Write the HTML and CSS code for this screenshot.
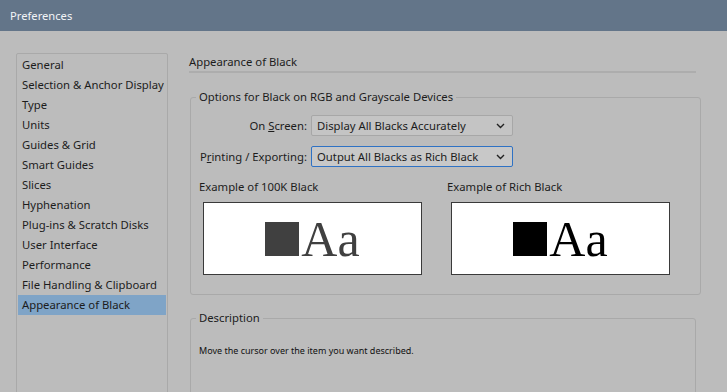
FILE: index.html
```html
<!DOCTYPE html>
<html lang="en">
<head>
    <meta charset="UTF-8">
    <title>Preferences</title>
    <link rel="stylesheet" href="styles.css">
</head>
<body>

<div class="titlebar">Preferences</div>

<div class="window">
    <ul class="sidebar">
        <li>General</li>
        <li>Selection &amp; Anchor Display</li>
        <li>Type</li>
        <li>Units</li>
        <li>Guides &amp; Grid</li>
        <li>Smart Guides</li>
        <li>Slices</li>
        <li>Hyphenation</li>
        <li>Plug-ins &amp; Scratch Disks</li>
        <li>User Interface</li>
        <li>Performance</li>
        <li>File Handling &amp; Clipboard</li>
        <li class="selected">Appearance of Black</li>
    </ul>

    <div class="panel">
        <h3 class="panel-title">Appearance of Black</h3>

        <fieldset class="group">
            <legend>Options for Black on RGB and Grayscale Devices</legend>

            <div class="row">
                <label>On <u>S</u>creen:</label>
                <div class="dropdown">
                    <span>Display All Blacks Accurately</span>
                    <svg width="9" height="6" viewBox="0 0 9 6"><path d="M1 1 L4.5 4.5 L8 1" fill="none" stroke="#222" stroke-width="1.4"/></svg>
                </div>
            </div>
            <div class="row">
                <label>P<u>r</u>inting / Exporting:</label>
                <div class="dropdown focused">
                    <span>Output All Blacks as Rich Black</span>
                    <svg width="9" height="6" viewBox="0 0 9 6"><path d="M1 1 L4.5 4.5 L8 1" fill="none" stroke="#222" stroke-width="1.4"/></svg>
                </div>
            </div>

            <div class="examples">
                <div class="example">
                    <div class="example-label">Example of 100K Black</div>
                    <div class="swatch k100">
                        <span class="square"></span><span class="aa">Aa</span>
                    </div>
                </div>
                <div class="example">
                    <div class="example-label">Example of Rich Black</div>
                    <div class="swatch rich">
                        <span class="square"></span><span class="aa">Aa</span>
                    </div>
                </div>
            </div>
        </fieldset>

        <fieldset class="group description">
            <legend>Description</legend>
            <p>Move the cursor over the item you want described.</p>
        </fieldset>
    </div>
</div>

</body>
</html>
```

FILE: styles.css
```css
html, body { margin: 0; height: 100%; overflow: hidden; }
body {
  background: #bcbcbc;
  font-family: "Noto Sans", "Open Sans", sans-serif;
  font-size: 11.3px;
  color: #1c1c1c;
}

.titlebar {
  height: 31px;
  line-height: 31px;
  background: #637589;
  color: #f2f4f7;
  font-size: 11.2px;
  padding-left: 10px;
}

.window {
  display: flex;
  padding: 22px 0 0 16px;
}

.sidebar {
  list-style: none;
  margin: 0;
  padding: 1px;
  width: 148px;
  height: 400px;
  border: 1px solid #a9a9a9;
  border-radius: 2px;
  flex-shrink: 0;
}
.sidebar li {
  height: 20px;
  line-height: 20px;
  padding-left: 4px;
  white-space: nowrap;
}
.sidebar li.selected { background: #7fa4c7; }

.panel {
  margin-left: 21px;
  width: 507px;
}

.panel-title {
  margin: 0;
  font-size: 11.3px;
  font-weight: normal;
  line-height: 14px;
  padding: 2px 0 2px;
  border-bottom: 2px solid #adadad;
}

.group {
  margin: 17px 0 0 1px;
  padding: 0 5px 19px;
  border: 1px solid #a9a9a9;
  border-radius: 3px;
}
.group legend {
  padding: 0 3px;
  line-height: 14px;
}

.row {
  display: flex;
  align-items: center;
  margin-top: 11px;
}
.row + .row { margin-top: 10px; }
.row label {
  width: 111px;
  text-align: right;
  margin-right: 4px;
  white-space: nowrap;
}
.dropdown {
  width: 191px;
  height: 19px;
  padding: 0 4px 0 5px;
  display: flex;
  align-items: center;
  justify-content: space-between;
  background: #c4c4c4;
  border: 1px solid #a7a7a7;
  border-radius: 2px;
}
.dropdown.focused {
  background: #c8c8c8;
  border-color: #2f72c4;
}
.dropdown svg { margin-right: 3px; }

.examples {
  display: flex;
  margin-top: 13px;
  padding-left: 3px;
}
.example { width: 248px; }
.example-label { line-height: 14px; }
.swatch {
  margin: 8px 0 0 4px;
  width: 217px;
  height: 71px;
  background: #fff;
  border: 1px solid #3a3a3a;
  display: flex;
  align-items: center;
  justify-content: center;
}
.square {
  width: 34px;
  height: 34px;
  margin-right: 2px;
}
.aa {
  font-family: "Liberation Serif", serif;
  font-size: 50px;
  line-height: 50px;
}
.k100 .square { background: #404040; }
.k100 .aa { color: #404040; }
.rich .square { background: #000; }
.rich .aa { color: #000; }

.description {
  margin-top: 16px;
  height: 200px;
}
.description p {
  margin: 19px 0 0 3px;
  font-size: 9px;
  color: #111;
}
```
